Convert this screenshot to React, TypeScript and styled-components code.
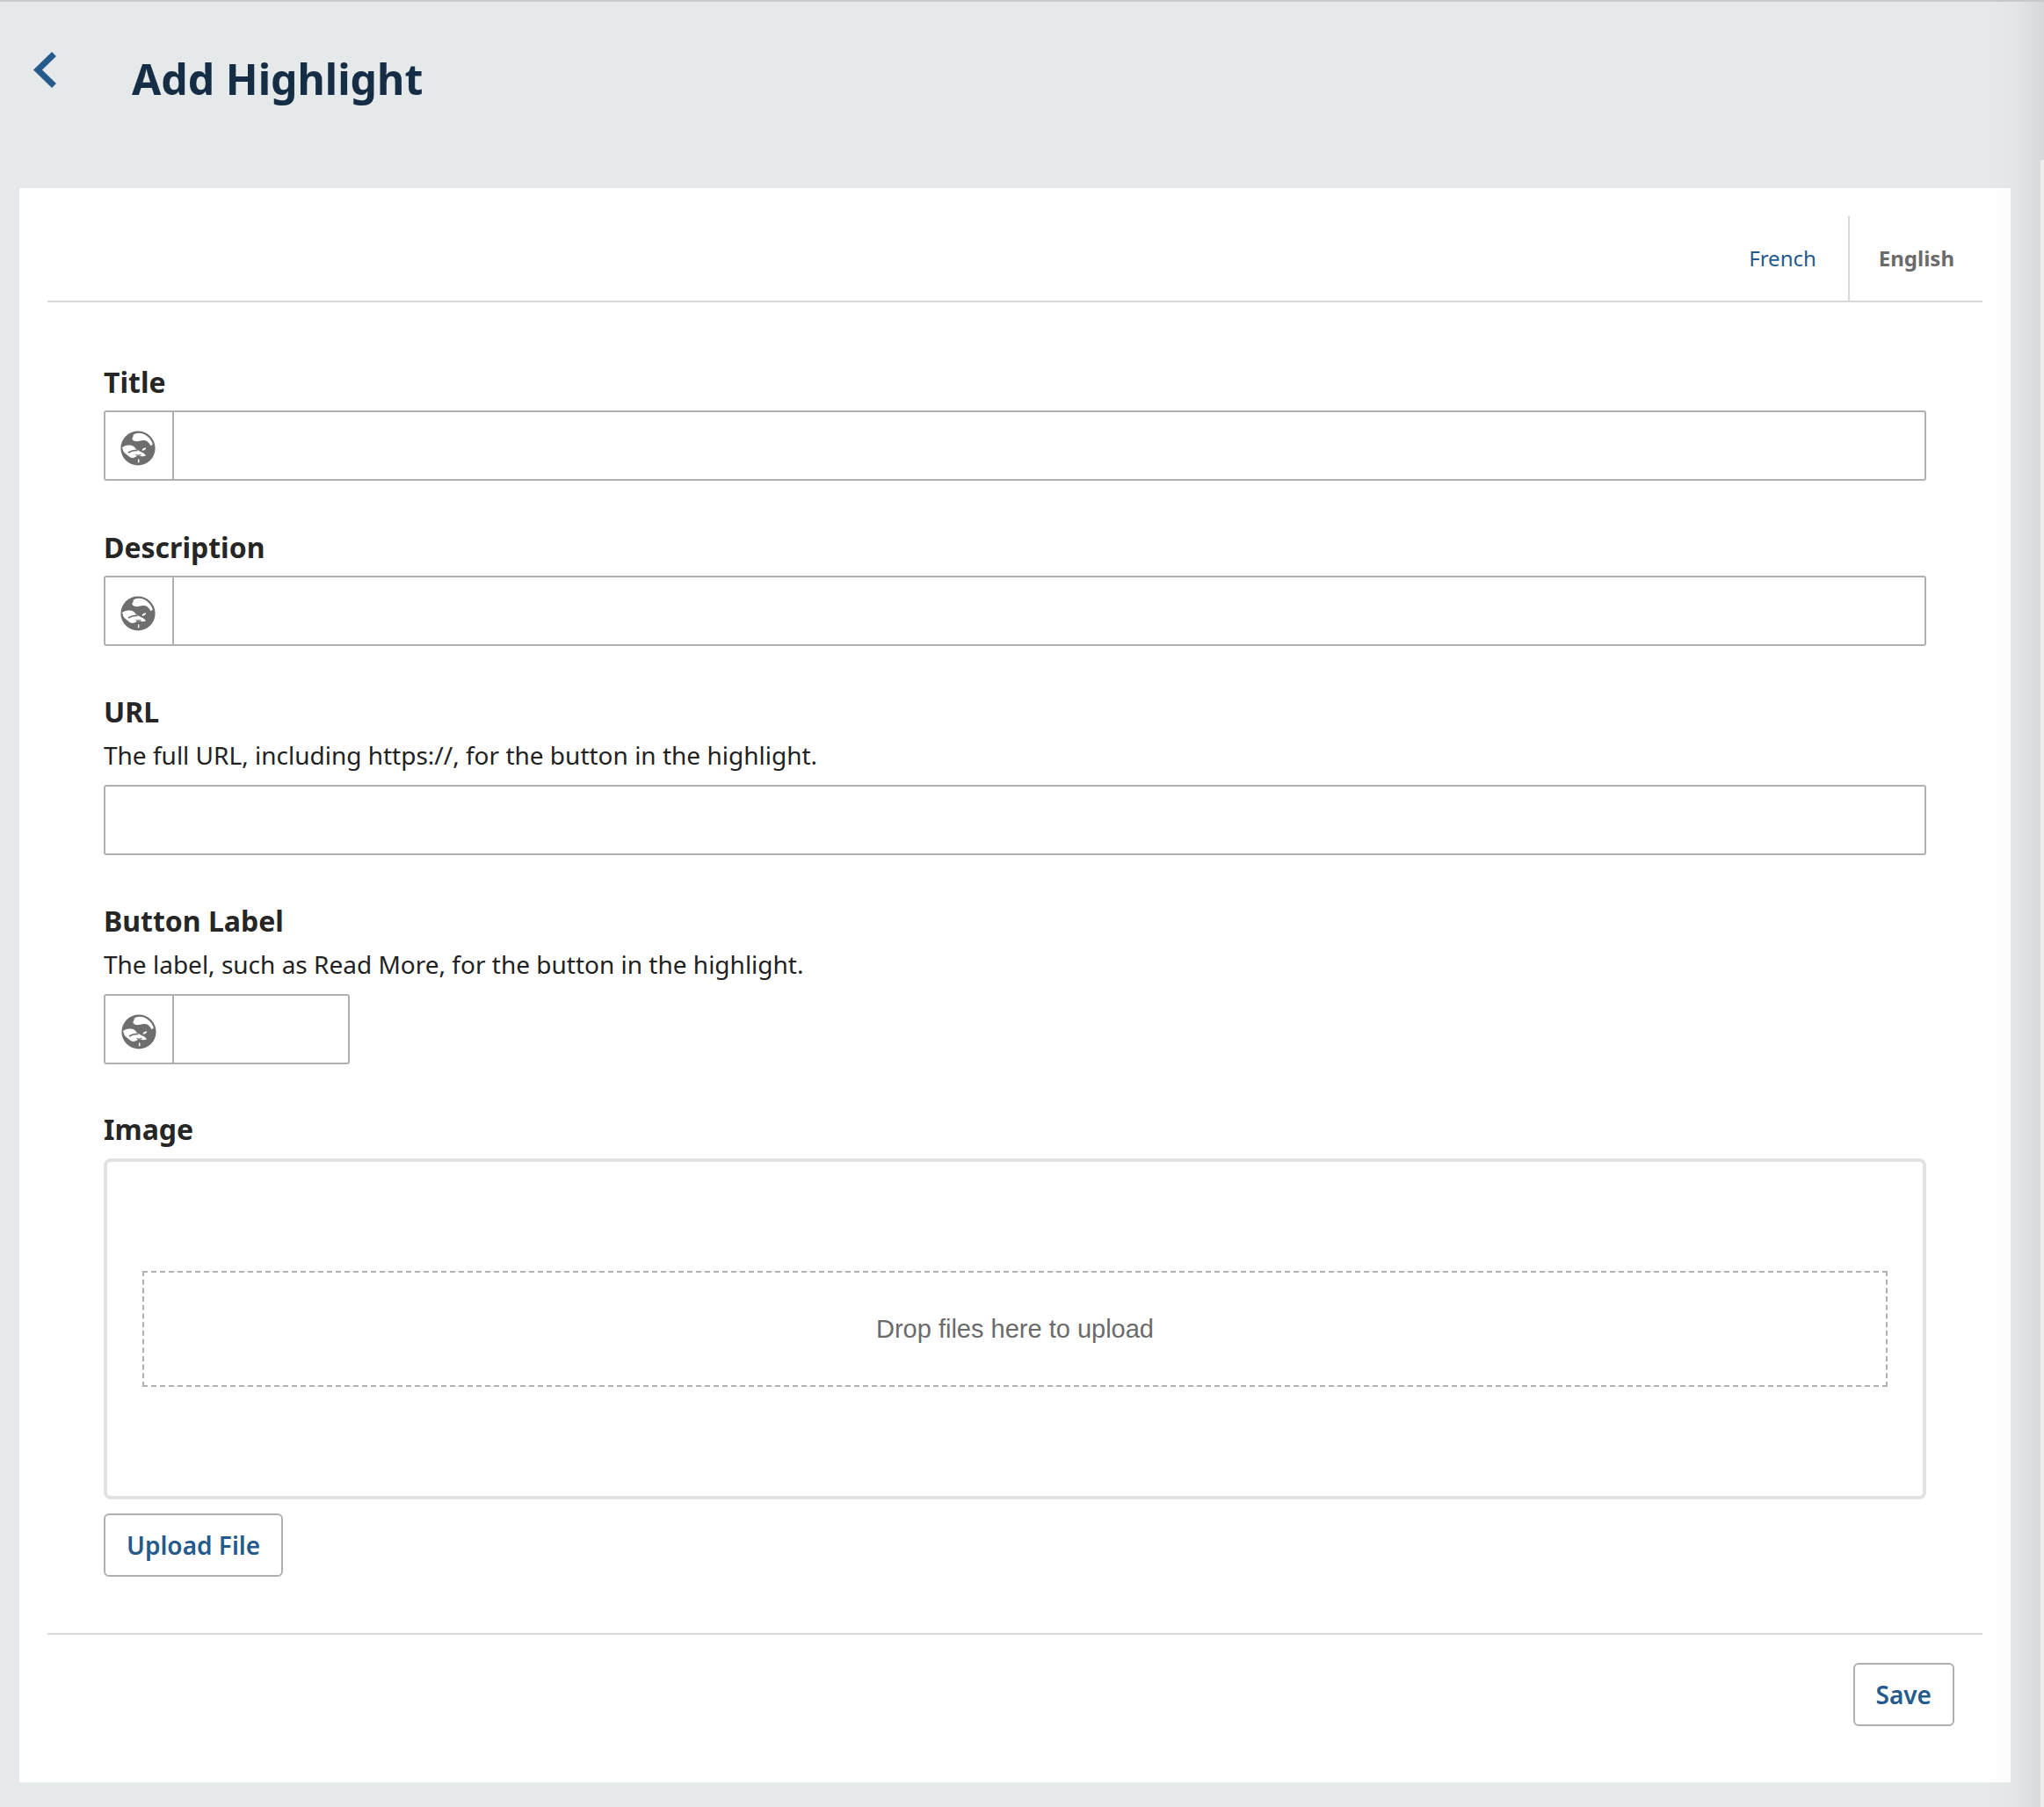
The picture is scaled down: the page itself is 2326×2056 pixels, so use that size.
import React from 'react';
import styled, { createGlobalStyle } from 'styled-components';

const Global = createGlobalStyle`
  html, body {
    margin: 0;
    padding: 0;
    background: #e6e9ea;
  }
  * {
    box-sizing: border-box;
  }
  a {
    text-decoration: none;
  }
`;

const Page = styled.div`
  position: relative;
  width: 2326px;
  height: 2056px;
  overflow: hidden;
  border-top: 2px solid #c6cacc;
  background: #e6e9ea;
  font-family: 'Noto Sans', sans-serif;
  color: #222;
`;

const EdgeShade = styled.div`
  position: absolute;
  top: 0;
  right: 0;
  bottom: 0;
  width: 66px;
  pointer-events: none;
  background: linear-gradient(to right, rgba(0, 0, 0, 0), rgba(0, 0, 0, 0.012) 50%, rgba(0, 0, 0, 0.075));
`;

const ScrollTrack = styled.div`
  position: absolute;
  top: 180px;
  right: 0;
  bottom: 0;
  width: 4px;
  background: #ededed;
`;

const Header = styled.header`
  display: flex;
  align-items: flex-start;
  height: 212px;
  padding: 55px 0 0 36px;
`;

const BackLink = styled.a`
  display: block;
  width: 30px;
  height: 46px;
  margin-right: 84px;
  color: #255a8c;
`;

const Heading = styled.h1`
  margin: -3px 0 0;
  font-size: 48.2px;
  line-height: 70px;
  font-weight: 700;
  color: #152d45;
`;

const Panel = styled.main`
  width: 2266px;
  height: 1814px;
  margin-left: 22px;
  padding: 32px 32px 0 32px;
  background: #fff;
`;

const Tabs = styled.nav`
  display: flex;
  justify-content: flex-end;
  height: 98px;
  border-bottom: 2px solid #d8d9da;
`;

const Tab = styled.a<{ $active?: boolean }>`
  display: flex;
  align-items: center;
  height: 96px;
  padding: ${_ => (_.$active ? '0 32px 2px 33px' : '0 36px 2px 0')};
  font-size: 24px;
  font-weight: ${_ => (_.$active ? 700 : 400)};
  color: ${_ => (_.$active ? '#6b6b6b' : '#255a8c')};
  border-left: ${_ => (_.$active ? '2px solid #d8d9da' : 'none')};
`;

const Form = styled.form`
  display: flex;
  flex-direction: column;
  height: 1516px;
  padding: 67px 64px 0 64px;
  border-bottom: 2px solid #d8d9da;
`;

const Field = styled.div<{ $gap?: number }>`
  margin-bottom: ${_ => _.$gap ?? 51}px;
`;

const Label = styled.label`
  display: block;
  height: 48px;
  font-size: 32px;
  line-height: 48px;
  font-weight: 700;
  color: #262626;
`;

const Hint = styled.p`
  margin: 0;
  height: 51px;
  padding-top: 4px;
  font-size: 28px;
  line-height: 42px;
  color: #222;
`;

const InputBox = styled.div<{ $small?: boolean }>`
  display: flex;
  width: ${_ => (_.$small ? '280px' : '100%')};
  height: 80px;
  margin-top: 8px;
  background: #fff;
  border: 2px solid #b0b0b0;
  border-radius: 3px;
`;

const GlobeCell = styled.span<{ $small?: boolean }>`
  display: flex;
  flex: 0 0 78px;
  align-items: center;
  justify-content: center;
  padding: 6px ${_ => (_.$small ? 0 : 3)}px 0 0;
  border-right: 2px solid #b0b0b0;
`;

const TextInput = styled.input`
  flex: 1;
  min-width: 0;
  padding: 0 16px;
  border: 0;
  outline: 0;
  background: transparent;
  font: inherit;
`;

const DropArea = styled.div`
  display: flex;
  align-items: center;
  height: 388px;
  margin-top: 9px;
  padding: 0 40px;
  border: 4px solid #e2e2e2;
  border-radius: 8px;
`;

const DropZone = styled.div`
  display: flex;
  flex: 1;
  align-items: center;
  justify-content: center;
  height: 132px;
  border: 2px dashed #b0b0b0;
  font-family: 'Liberation Sans', Arial, sans-serif;
  font-size: 29px;
  color: #6b6b6b;
`;

const OutlineButton = styled.button`
  height: 72px;
  padding: 0 24px;
  background: #fff;
  border: 2px solid #b0b0b0;
  border-radius: 6px;
  font-family: 'Noto Sans', sans-serif;
  font-size: 28px;
  font-weight: 600;
  color: #255a8c;
`;

const UploadRow = styled.div`
  margin-top: 16px;
`;

const Footer = styled.footer`
  display: flex;
  justify-content: flex-end;
  padding: 32px 32px 0 0;
`;

function Globe() {
  return (
    <svg width="40" height="40" viewBox="0 0 40 40">
      <circle cx="20" cy="20" r="19.6" fill="#6e6e6e" />
      <g fill="#fff">
        <path d="M14.500 5C15.500 6.500 13 8 13.500 10c2 2.300 5 2.500 8 1.800 3-.8 5.500-1.500 8-.2 2.500 1.300 3.500 3.600 5 5.700l2.300-1.500c-1-3.800-3-6.800-5.800-9C28 4 25 3 20.500 2.800c-2.200 0-4.200.8-6 2.200Z" />
        <path d="M1.500 20C3 17.500 6.500 16.200 11 16.500c3.500.3 5.500 2.200 6.500 4.300l5.500 3.200c2.500.8 5 2.500 6 4.500-3 1.300-6.500.8-9.500-.5-1.500 2.300-5.500 3.800-8.500 2.300-1.800-1.400-3.300-2.800-5-4-2.300-1.800-3.300-3.800-3.500-6.300Z" />
        <path d="M24.500 22c.8-1.400 2-2.300 3.800-2.700l.9.9c-.9 1.400-2.400 2.300-4 2.500Z" />
        <path d="M20 32.500h1.300l.3 3.500-1.700.6Z" />
      </g>
      <path d="M9 25c3.200-1.800 6.800-2.800 10.500-2.500" fill="none" stroke="#6e6e6e" strokeWidth="1.800" />
      <path d="M17.500 27.500c2 .7 4 .7 6 .1" fill="none" stroke="#6e6e6e" strokeWidth="1.200" />
    </svg>
  );
}

function GlobeInput({ small }: { small?: boolean }) {
  return (
    <InputBox $small={small}>
      <GlobeCell $small={small}>
        <Globe />
      </GlobeCell>
      <TextInput type="text" />
    </InputBox>
  );
}

export default function App() {
  return (
    <>
      <Global />
      <Page>
        <Header>
          <BackLink href="#" aria-label="Back">
            <svg width="30" height="46" viewBox="0 0 30 46">
              <path d="M25.500 4.500 7 22.500 25.500 40.500" fill="none" stroke="currentColor" strokeWidth="7" />
            </svg>
          </BackLink>
          <Heading>Add Highlight</Heading>
        </Header>
        <Panel>
          <Tabs>
            <Tab href="#">French</Tab>
            <Tab href="#" $active>English</Tab>
          </Tabs>
          <Form>
            <Field $gap={52}>
              <Label>Title</Label>
              <GlobeInput />
            </Field>
            <Field>
              <Label>Description</Label>
              <GlobeInput />
            </Field>
            <Field>
              <Label>URL</Label>
              <Hint>The full URL, including https://, for the button in the highlight.</Hint>
              <InputBox>
                <TextInput type="text" />
              </InputBox>
            </Field>
            <Field $gap={50}>
              <Label>Button Label</Label>
              <Hint>The label, such as Read More, for the button in the highlight.</Hint>
              <GlobeInput small />
            </Field>
            <Field $gap={0}>
              <Label>Image</Label>
              <DropArea>
                <DropZone>Drop files here to upload</DropZone>
              </DropArea>
              <UploadRow>
                <OutlineButton type="button">Upload File</OutlineButton>
              </UploadRow>
            </Field>
          </Form>
          <Footer>
            <OutlineButton type="button">Save</OutlineButton>
          </Footer>
        </Panel>
        <EdgeShade />
        <ScrollTrack />
      </Page>
    </>
  );
}
